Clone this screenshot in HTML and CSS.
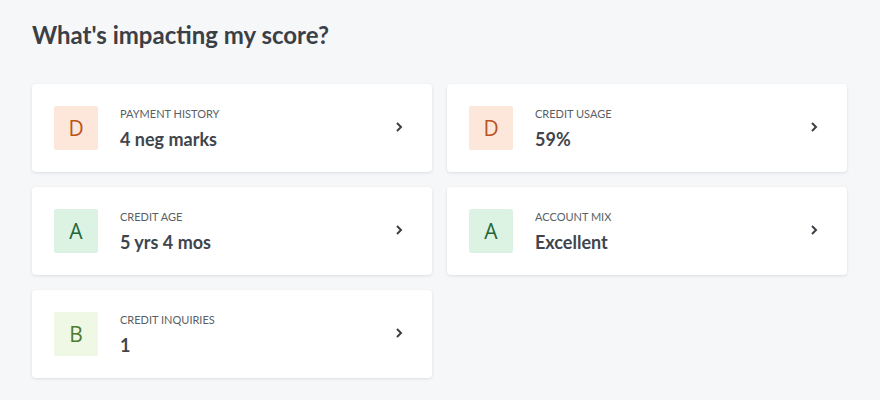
FILE: index.html
```html
<!DOCTYPE html>
<html lang="en">

<head>
    <meta charset="UTF-8">
    <meta name="viewport" content="width=device-width, initial-scale=1.0">
    <title>What's impacting my score?</title>
    <link rel="stylesheet" href="styles.css">
</head>

<body>
    <div class="page">
        <h1 class="title">What's impacting my score?</h1>
        <div class="factors">
            <a class="factor" href="#">
                <div class="grade grade-d">D</div>
                <div class="info">
                    <div class="label">Payment history</div>
                    <div class="value">4 neg marks</div>
                </div>
                <svg class="chevron" width="8" height="12" viewBox="0 0 8 12"><path d="M2 2l4 4-4 4" /></svg>
            </a>
            <a class="factor" href="#">
                <div class="grade grade-d">D</div>
                <div class="info">
                    <div class="label">Credit usage</div>
                    <div class="value">59%</div>
                </div>
                <svg class="chevron" width="8" height="12" viewBox="0 0 8 12"><path d="M2 2l4 4-4 4" /></svg>
            </a>
            <a class="factor" href="#">
                <div class="grade grade-a">A</div>
                <div class="info">
                    <div class="label">Credit age</div>
                    <div class="value">5 yrs 4 mos</div>
                </div>
                <svg class="chevron" width="8" height="12" viewBox="0 0 8 12"><path d="M2 2l4 4-4 4" /></svg>
            </a>
            <a class="factor" href="#">
                <div class="grade grade-a">A</div>
                <div class="info">
                    <div class="label">Account mix</div>
                    <div class="value">Excellent</div>
                </div>
                <svg class="chevron" width="8" height="12" viewBox="0 0 8 12"><path d="M2 2l4 4-4 4" /></svg>
            </a>
            <a class="factor" href="#">
                <div class="grade grade-b">B</div>
                <div class="info">
                    <div class="label">Credit inquiries</div>
                    <div class="value">1</div>
                </div>
                <svg class="chevron" width="8" height="12" viewBox="0 0 8 12"><path d="M2 2l4 4-4 4" /></svg>
            </a>
        </div>
    </div>
</body>

</html>
```

FILE: styles.css
```css
* {
    margin: 0;
    padding: 0;
    box-sizing: border-box;
}

body {
    font-family: Lato, 'Open Sans', sans-serif;
    background: #f6f7f9;
    color: #3b4046;
}

.page {
    padding: 20px 32px;
}

.title {
    font-size: 24px;
    font-weight: 700;
    line-height: 30px;
    color: #3b4046;
    margin-bottom: 34px;
}

.factors {
    display: grid;
    grid-template-columns: 400px 400px;
    column-gap: 15px;
    row-gap: 15px;
}

.factor {
    display: flex;
    align-items: center;
    height: 88px;
    padding: 0 29px 0 22px;
    background: #fff;
    border-radius: 4px;
    box-shadow: 0 1px 3px rgba(30, 40, 60, 0.12);
    text-decoration: none;
    color: inherit;
}

.grade {
    width: 44px;
    height: 44px;
    border-radius: 2px;
    display: flex;
    justify-content: center;
    align-items: center;
    font-size: 21px;
    font-family: 'Open Sans', Lato, sans-serif;
    flex-shrink: 0;
}

.grade-d {
    background: #fde7db;
    color: #b9531e;
}

.grade-a {
    background: #dcf3e3;
    color: #23663a;
}

.grade-b {
    background: #eef8e4;
    color: #4d7a2c;
}

.info {
    flex: 1;
    margin-left: 22px;
}

.label {
    font-size: 11px;
    text-transform: uppercase;
    color: #5a5f66;
    line-height: 14px;
    margin-bottom: 7px;
}

.value {
    font-size: 18px;
    font-weight: 700;
    line-height: 22px;
    color: #40454c;
}

.chevron {
    fill: none;
    stroke: #3b4046;
    stroke-width: 2;
    margin-top: -2px;
    flex-shrink: 0;
}
```
